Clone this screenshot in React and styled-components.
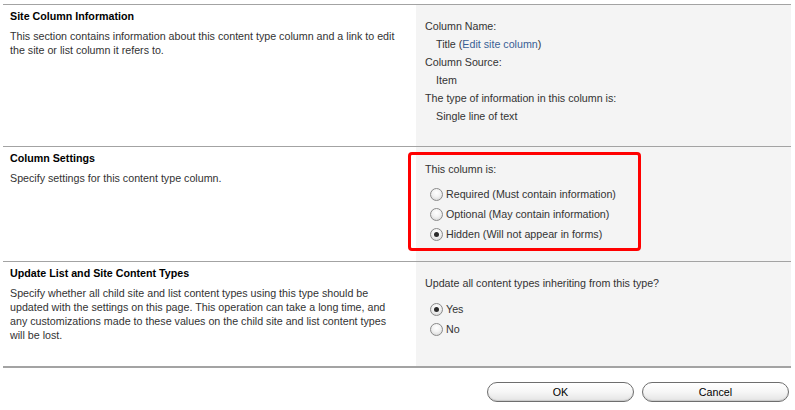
import styled, { createGlobalStyle } from 'styled-components'

const GlobalStyle = createGlobalStyle`
  body {
    margin: 0;
    background: #ffffff;
    font-family: "Liberation Sans", Arial, sans-serif;
    font-size: 10.7px;
    color: #333333;
  }
`

const Page = styled.div`
  width: 788px;
  padding: 4px 0 0 3px;
`

const Section = styled.div`
  display: grid;
  grid-template-columns: 413px 1fr;
  min-height: ${(p) => p.height}px;
  border-top: 1px solid #a3a3a3;
  box-sizing: border-box;
`

const Info = styled.div`
  padding: 4px 0 0 7px;
`

const Heading = styled.div`
  font-weight: bold;
  color: #000000;
  line-height: 14px;
  height: 14px;
  margin-bottom: 6px;
`

const Description = styled.div`
  line-height: 14px;
  span {
    display: block;
    white-space: nowrap;
  }
`

const Panel = styled.div`
  background: #f4f4f4;
  padding: ${(p) => p.top}px 0 0 9px;
`

const Line = styled.div`
  line-height: 18px;
  padding-left: ${(p) => (p.indent ? 11 : 0)}px;
`

const Link = styled.a`
  color: #3a5f94;
  text-decoration: none;
`

const Highlight = styled.div`
  margin-left: -17px;
  width: 213px;
  height: 88px;
  border: 3px solid #ff0000;
  border-radius: 4px;
  padding: 5px 0 0 14px;
`

const Options = styled.div`
  display: flex;
  flex-direction: column;
  gap: ${(p) => p.gap}px;
  margin-top: ${(p) => p.top}px;
  padding-left: 5px;
`

const Option = styled.label`
  display: flex;
  align-items: center;
  gap: 3px;
  height: 14px;
  line-height: 14px;
`

const Radio = styled.input.attrs({ type: 'radio' })`
  appearance: none;
  margin: 0;
  width: 13px;
  height: 13px;
  border-radius: 50%;
  border: 1px solid #8a8a8a;
  box-sizing: border-box;
  background: radial-gradient(circle at 50% 35%, #ffffff 0%, #f2f2f2 45%, #cfcfcf 100%);
  display: grid;
  place-items: center;

  &:checked::after {
    content: '';
    width: 5px;
    height: 5px;
    border-radius: 50%;
    background: #2a2a2a;
  }
`

const Footer = styled.div`
  border-top: 2px solid #a3a3a3;
  display: flex;
  justify-content: flex-end;
  gap: 8px;
  padding: 14px 2px 0 0;
`

const Button = styled.button`
  width: 147px;
  height: 20px;
  border: 1px solid #6e6e6e;
  border-radius: 10px;
  background: linear-gradient(#ffffff 0%, #f6f6f6 50%, #e4e4e4 100%);
  box-shadow: inset 0 -1px 1px rgba(0, 0, 0, 0.12);
  font-family: "Liberation Sans", Arial, sans-serif;
  font-size: 10.7px;
  color: #000000;
  padding: 0;
`

export default function App() {
  return (
    <>
      <GlobalStyle />
      <Page>
        <Section height={142}>
          <Info>
            <Heading>Site Column Information</Heading>
            <Description>
              <span>This section contains information about this content type column and a link to edit</span>
              <span>the site or list column it refers to.</span>
            </Description>
          </Info>
          <Panel top={12}>
            <Line>Column Name:</Line>
            <Line indent>
              Title (<Link href="#">Edit site column</Link>)
            </Line>
            <Line>Column Source:</Line>
            <Line indent>Item</Line>
            <Line>The type of information in this column is:</Line>
            <Line indent>Single line of text</Line>
          </Panel>
        </Section>

        <Section height={115}>
          <Info>
            <Heading>Column Settings</Heading>
            <Description>
              <span>Specify settings for this content type column.</span>
            </Description>
          </Info>
          <Panel top={5}>
            <Highlight>
              <Line>This column is:</Line>
              <Options gap={6} top={9}>
                <Option>
                  <Radio name="req" />
                  Required (Must contain information)
                </Option>
                <Option>
                  <Radio name="req" />
                  Optional (May contain information)
                </Option>
                <Option>
                  <Radio name="req" defaultChecked />
                  Hidden (Will not appear in forms)
                </Option>
              </Options>
            </Highlight>
          </Panel>
        </Section>

        <Section height={105}>
          <Info>
            <Heading>Update List and Site Content Types</Heading>
            <Description>
              <span>Specify whether all child site and list content types using this type should be</span>
              <span>updated with the settings on this page. This operation can take a long time, and</span>
              <span>any customizations made to these values on the child site and list content types</span>
              <span>will be lost.</span>
            </Description>
          </Info>
          <Panel top={12}>
            <Line>Update all content types inheriting from this type?</Line>
            <Options gap={6} top={10}>
              <Option>
                <Radio name="upd" defaultChecked />
                Yes
              </Option>
              <Option>
                <Radio name="upd" />
                No
              </Option>
            </Options>
          </Panel>
        </Section>

        <Footer>
          <Button>OK</Button>
          <Button>Cancel</Button>
        </Footer>
      </Page>
    </>
  )
}
